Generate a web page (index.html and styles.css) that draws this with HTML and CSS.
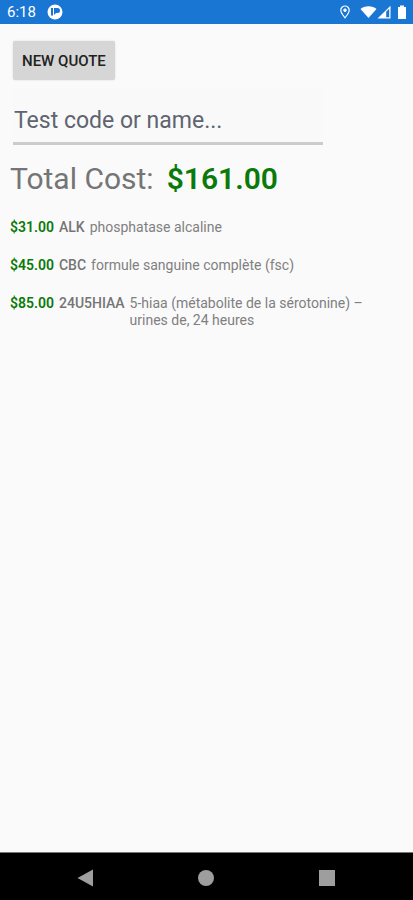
FILE: index.html
```
<!DOCTYPE html>
<html lang="en">
<head>
  <meta charset="UTF-8">
  <title>Lab Quote</title>
  <meta name="viewport" content="width=device-width, initial-scale=1.0">
  <link rel="stylesheet" href="styles.css">
</head>
<body>

<header class="status-bar">
  <span>6:18</span>
  <svg class="app-icon" width="16" height="16" viewBox="0 0 16 16">
    <circle cx="8" cy="8" r="7.5" fill="#fff"/>
    <path d="M4 4h2v7.500H4z" fill="#1976d2"/>
    <path d="M7 4h3.500a2.500 2.500 0 0 1 0 5H9L7 11z" fill="#1976d2"/>
  </svg>
  <div class="status-icons">
    <svg class="pin" width="12" height="14" viewBox="0 0 12 14" fill="none" stroke="#fff">
      <path d="M6 12.800C3.500 9.600 1.800 7.500 1.800 5.200a4.200 4.200 0 0 1 8.400 0C10.200 7.500 8.500 9.600 6 12.800z" stroke-width="1.200"/>
      <circle cx="6" cy="5.200" r="1.300" fill="#fff"/>
    </svg>
    <svg width="17" height="14" viewBox="0 0 17 14">
      <path d="M0.500 4C4.500 0.200 12.500 0.200 16.500 4L8.500 13z" fill="#fff"/>
    </svg>
    <svg width="14" height="14" viewBox="0 0 14 14">
      <path d="M0.500 13.500L13.500 0.800V13.500z" fill="#fff"/>
      <path d="M9.200 6.800L12.200 3.800V12.300H9.200z" fill="#1976d2"/>
    </svg>
    <svg class="battery" width="10" height="14" viewBox="0 0 10 14">
      <path d="M3 0.500h4v1.500h2v12H1V2h2z" fill="#fff"/>
    </svg>
  </div>
</header>

<main>
  <button type="button" class="new-quote">NEW QUOTE</button>

  <input type="text" class="search" placeholder="Test code or name..." aria-label="Test code or name">

  <h1 class="total">Total Cost: <strong>$161.00</strong></h1>

  <ul class="tests">
    <li>
      <span class="price">$31.00</span>
      <span class="code">ALK</span>
      <span class="name">phosphatase alcaline</span>
    </li>
    <li>
      <span class="price">$45.00</span>
      <span class="code">CBC</span>
      <span class="name">formule sanguine complète (fsc)</span>
    </li>
    <li>
      <span class="price">$85.00</span>
      <span class="code">24U5HIAA</span>
      <span class="name">5-hiaa (métabolite de la sérotonine) – urines de, 24 heures</span>
    </li>
  </ul>
</main>

<nav class="nav-bar">
  <button type="button" aria-label="Back">
    <svg width="18" height="18" viewBox="0 0 18 18"><path d="M0.500 9L16 0.500v17z" fill="#9e9e9e"/></svg>
  </button>
  <button type="button" aria-label="Home">
    <svg width="18" height="18" viewBox="0 0 18 18"><circle cx="9" cy="9" r="8" fill="#9e9e9e"/></svg>
  </button>
  <button type="button" aria-label="Overview">
    <svg width="18" height="18" viewBox="0 0 18 18"><rect x="1" y="1" width="16" height="16" fill="#9e9e9e"/></svg>
  </button>
</nav>

</body>
</html>
```

FILE: styles.css
```
* {
  box-sizing: border-box;
}
body {
  margin: 0;
  min-height: 100vh;
  display: flex;
  flex-direction: column;
  background-color: #fafafa;
  color: #757575;
  font-family: Roboto, sans-serif;
}
.status-bar {
  display: flex;
  align-items: center;
  height: 24px;
  padding: 0 6px 0 7px;
  background-color: #1976d2;
  color: #fff;
  font-size: 15px;
}
.app-icon {
  margin-left: 11px;
}
.status-icons {
  display: flex;
  align-items: center;
  margin-left: auto;
}
.pin {
  margin-right: 9px;
}
.battery {
  margin-left: 6px;
}
main {
  flex: 1;
  padding: 17px 10px;
}
.new-quote {
  display: block;
  height: 39px;
  margin-left: 3px;
  padding: 0 9px;
  border: none;
  border-radius: 2px;
  background-color: #d6d6d6;
  box-shadow: 0 0 2px rgba(0, 0, 0, 0.15);
  color: #212121;
  font: 500 15px Roboto, sans-serif;
}
.search {
  display: block;
  width: 79%;
  height: 57px;
  margin: 8px 0 0 3px;
  padding: 11px 1px 0;
  border: none;
  border-bottom: 3px solid #ccc;
  background-color: #f9f9f9;
  color: #212121;
  font: 23px Roboto, sans-serif;
}
.search::placeholder {
  color: #5f6470;
  opacity: 1;
}
.total {
  display: flex;
  gap: 13px;
  margin: 16px 0 0;
  font-size: 30px;
  font-weight: 400;
  line-height: 36px;
}
.total strong {
  color: #0a7a0a;
  font-weight: 600;
}
.tests {
  display: flex;
  flex-direction: column;
  gap: 21px;
  margin: 22px 0 0;
  padding: 0;
  list-style: none;
  font-size: 14px;
  line-height: 17px;
}
.tests li {
  display: flex;
  gap: 5px;
}
.price {
  color: #0a7a0a;
  font-weight: 600;
}
.code {
  font-weight: 500;
}
.name {
  max-width: 240px;
  color: #808080;
}
.nav-bar {
  display: grid;
  grid-template-columns: repeat(3, 1fr);
  height: 48px;
  padding: 2px 26px 0;
  border-top: 1px solid #777;
  background-color: #000;
}
.nav-bar button {
  display: flex;
  align-items: center;
  justify-content: center;
  padding: 0;
  border: none;
  background: none;
}
```
